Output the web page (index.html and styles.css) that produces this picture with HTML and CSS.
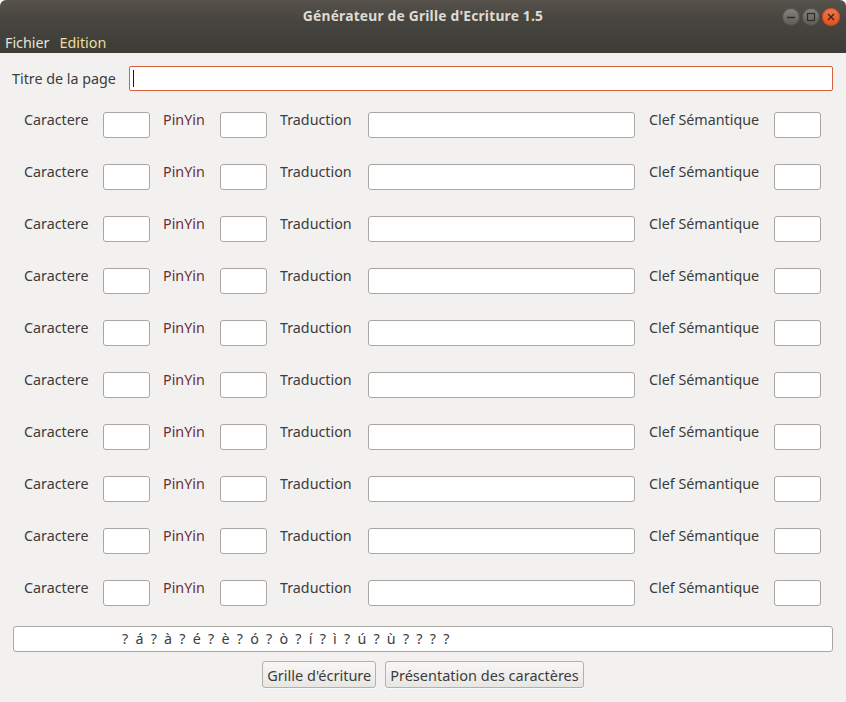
FILE: index.html
```html
<!DOCTYPE html>
<html lang="fr">
<head>
<meta charset="utf-8">
<title>Générateur de Grille d'Ecriture 1.5</title>
<link rel="stylesheet" href="styles.css">
</head>
<body>
<div class="window">
  <header class="chrome">
    <div class="titlebar">
      <span></span>
      <span class="title">Générateur de Grille d'Ecriture 1.5</span>
      <div class="controls">
        <span class="ctl ctl-min"><svg width="18" height="18" viewBox="0 0 18 18"><path d="M5 9.5h8" stroke="#2e2d2a" stroke-width="1.3"/></svg></span>
        <span class="ctl ctl-max"><svg width="18" height="18" viewBox="0 0 18 18"><rect x="5.5" y="5.5" width="7" height="7" fill="none" stroke="#2e2d2a" stroke-width="1.2"/></svg></span>
        <span class="ctl ctl-close"><svg width="18" height="18" viewBox="0 0 18 18"><path d="M6 6l6 6M12 6l-6 6" stroke="#3a2418" stroke-width="1.4"/></svg></span>
      </div>
    </div>
    <nav class="menubar">
      <span class="menu">Fichier</span>
      <span class="menu menu-2">Edition</span>
    </nav>
  </header>
  <main class="content">
    <div class="title-row">
      <label class="lbl-title">Titre de la page</label>
      <div class="field field-focus"><span class="caret"></span></div>
    </div>
    <div class="rows">
      <div class="row"><span class="lbl">Caractere</span><div class="field"></div><span class="lbl lbl-pin">PinYin</span><div class="field"></div><span class="lbl">Traduction</span><div class="field"></div><span class="lbl lbl-clef">Clef Sémantique</span><div class="field"></div></div>
      <div class="row"><span class="lbl">Caractere</span><div class="field"></div><span class="lbl lbl-pin">PinYin</span><div class="field"></div><span class="lbl">Traduction</span><div class="field"></div><span class="lbl lbl-clef">Clef Sémantique</span><div class="field"></div></div>
      <div class="row"><span class="lbl">Caractere</span><div class="field"></div><span class="lbl lbl-pin">PinYin</span><div class="field"></div><span class="lbl">Traduction</span><div class="field"></div><span class="lbl lbl-clef">Clef Sémantique</span><div class="field"></div></div>
      <div class="row"><span class="lbl">Caractere</span><div class="field"></div><span class="lbl lbl-pin">PinYin</span><div class="field"></div><span class="lbl">Traduction</span><div class="field"></div><span class="lbl lbl-clef">Clef Sémantique</span><div class="field"></div></div>
      <div class="row"><span class="lbl">Caractere</span><div class="field"></div><span class="lbl lbl-pin">PinYin</span><div class="field"></div><span class="lbl">Traduction</span><div class="field"></div><span class="lbl lbl-clef">Clef Sémantique</span><div class="field"></div></div>
      <div class="row"><span class="lbl">Caractere</span><div class="field"></div><span class="lbl lbl-pin">PinYin</span><div class="field"></div><span class="lbl">Traduction</span><div class="field"></div><span class="lbl lbl-clef">Clef Sémantique</span><div class="field"></div></div>
      <div class="row"><span class="lbl">Caractere</span><div class="field"></div><span class="lbl lbl-pin">PinYin</span><div class="field"></div><span class="lbl">Traduction</span><div class="field"></div><span class="lbl lbl-clef">Clef Sémantique</span><div class="field"></div></div>
      <div class="row"><span class="lbl">Caractere</span><div class="field"></div><span class="lbl lbl-pin">PinYin</span><div class="field"></div><span class="lbl">Traduction</span><div class="field"></div><span class="lbl lbl-clef">Clef Sémantique</span><div class="field"></div></div>
      <div class="row"><span class="lbl">Caractere</span><div class="field"></div><span class="lbl lbl-pin">PinYin</span><div class="field"></div><span class="lbl">Traduction</span><div class="field"></div><span class="lbl lbl-clef">Clef Sémantique</span><div class="field"></div></div>
      <div class="row"><span class="lbl">Caractere</span><div class="field"></div><span class="lbl lbl-pin">PinYin</span><div class="field"></div><span class="lbl">Traduction</span><div class="field"></div><span class="lbl lbl-clef">Clef Sémantique</span><div class="field"></div></div>
    </div>
    <div class="field field-chars">? á ? à ? é ? è ? ó ? ò ? í ? ì ? ú ? ù ? ? ? ?</div>
    <div class="buttons">
      <button class="btn" type="button">Grille d'écriture</button>
      <button class="btn" type="button">Présentation des caractères</button>
    </div>
  </main>
</div>
</body>
</html>
```
FILE: styles.css
```css
html, body {
  margin: 0;
  padding: 0;
  background: #ffffff;
}
body {
  width: 846px;
  height: 702px;
  overflow: hidden;
  font-family: "Noto Sans", "DejaVu Sans", sans-serif;
  font-size: 14.3px;
  color: #3c3c3c;
}
.window {
  width: 846px;
  height: 702px;
  background: #f2f1f0;
  border-radius: 6px 6px 0 0;
  overflow: hidden;
}
.chrome {
  height: 53px;
  background: linear-gradient(#57534c 0px, #47453f 20px, #3d3c37 53px);
  display: flex;
  flex-direction: column;
}
.titlebar {
  height: 31px;
  display: grid;
  grid-template-columns: 1fr auto 1fr;
  align-items: center;
}
.title {
  font-weight: bold;
  font-size: 13.8px;
  color: #dfdbd2;
  letter-spacing: 0.2px;
  padding-bottom: 1px;
}
.controls {
  display: flex;
  justify-self: end;
  gap: 2px;
  padding-right: 6px;
  padding-top: 2px;
}
.ctl {
  width: 18px;
  height: 18px;
  border-radius: 50%;
  display: flex;
  background: linear-gradient(#86847f, #5c5a55);
  box-shadow: inset 0 0 0 1px #4a4843;
}
.ctl-close {
  background: linear-gradient(#f27a4f, #e0501f);
  box-shadow: inset 0 0 0 1px #c2461c;
}
.menubar {
  height: 22px;
  display: flex;
  align-items: center;
  gap: 10px;
  padding-left: 5px;
}
.menu {
  color: #e4e6da;
  font-size: 14.3px;
}
.menu-2 {
  color: #ecdf9a;
}
.content {
  display: flex;
  flex-direction: column;
}
.title-row {
  display: flex;
  align-items: center;
  margin-top: 13px;
  padding-left: 12px;
}
.lbl-title {
  width: 117px;
}
.field {
  box-sizing: border-box;
  background: #ffffff;
  border: 1px solid #aaa7a2;
  border-radius: 3px;
  height: 26px;
}
.field-focus {
  width: 704px;
  height: 25px;
  border: 1px solid #d5623b;
  border-radius: 2px;
  display: flex;
  align-items: center;
  padding-left: 3px;
}
.caret {
  width: 1px;
  height: 17px;
  background: #1a1a1a;
}
.rows {
  display: flex;
  flex-direction: column;
  gap: 26px;
  margin-top: 21px;
  padding-left: 24px;
}
.row {
  display: grid;
  grid-template-columns: 79px 47px 70px 47px 101px 267px 139px 47px;
  align-items: start;
}
.lbl {
  line-height: 16px;
  white-space: nowrap;
}
.row .lbl:nth-child(3),
.row .lbl:nth-child(5) {
  padding-left: 13px;
}
.row .lbl-clef {
  padding-left: 14px;
}
.lbl-pin {
  color: #6a2c34;
}
.field-chars {
  margin: 20px 0 0 13px;
  width: 820px;
  padding-left: 108px;
  line-height: 24px;
  color: #3c3c3c;
  word-spacing: 3.5px;
}
.buttons {
  display: flex;
  justify-content: center;
  gap: 9px;
  margin-top: 9px;
}
.btn {
  font-family: inherit;
  font-size: 14.5px;
  color: #3c3c3c;
  height: 27px;
  padding: 0 4px;
  border: 1px solid #b4b0ab;
  border-radius: 3px;
  background: linear-gradient(#f8f7f6, #e8e6e3);
  box-shadow: 0 1px 0 rgba(255,255,255,0.6);
}
```
